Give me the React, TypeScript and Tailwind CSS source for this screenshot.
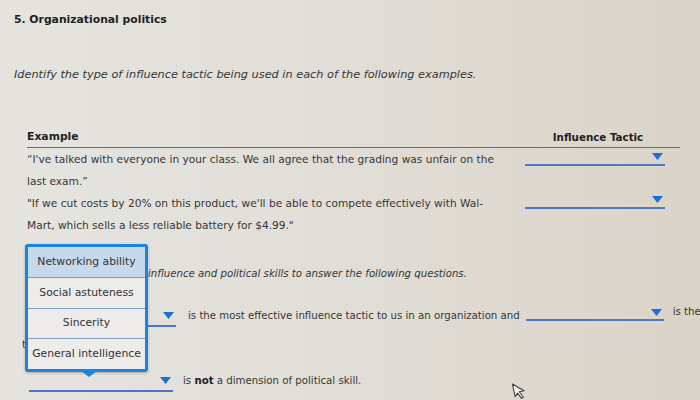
import React from "react";

const FONT = { fontFamily: '"DejaVu Sans", Verdana, sans-serif' };

interface DropProps {
  width: string;
  height: string;
  className?: string;
}

// underline-style select with the small blue arrow at the right end
const Drop: React.FC<DropProps> = ({ width, height, className = "" }) => (
  <div
    className={`${width} ${height} ${className} shrink-0 border-b-2 border-b-[#4d79c4] flex items-center justify-end pr-[2px]`}
  >
    <svg width="11" height="7" viewBox="0 0 11 7">
      <polygon points="0,0 11,0 5.5,7" fill="#1f6fd3" />
    </svg>
  </div>
);

const options = [
  { id: 1, label: "Networking ability", h: "h-[30px]", active: true },
  { id: 2, label: "Social astuteness", h: "h-[31px]", active: false },
  { id: 3, label: "Sincerity", h: "h-[30px]", active: false },
  { id: 4, label: "General intelligence", h: "h-[31px]", active: false },
];

const Popup: React.FC = () => (
  <div className="absolute left-[25px] top-[244px] w-[123px]">
    <div className="border-[3px] border-[#1c84dc] rounded-[3px] bg-[#edecea] shadow-[0_1px_3px_rgba(0,0,0,0.25)] flex flex-col">
      {options.map((o, i) => (
        <div
          key={o.id}
          className={`${o.h} flex items-center justify-center text-[10.8px] text-[#333] whitespace-nowrap ${
            o.active ? "bg-[#c6d8eb]" : ""
          } ${i > 0 ? "border-t border-t-[#7f9fc0]" : ""}`}
        >
          {o.label}
        </div>
      ))}
    </div>
    <div className="flex justify-center -mt-px pl-[4px]">
      <div className="w-0 h-0 border-l-[8px] border-l-transparent border-r-[8px] border-r-transparent border-t-[6px] border-t-[#1c84dc]" />
    </div>
  </div>
);

const Cursor: React.FC = () => (
  <svg
    className="absolute left-[512px] top-[382px]"
    width="16"
    height="18"
    viewBox="0 0 16 18"
  >
    <path
      d="M2 1 L2 14 L5 11 L8 17 L10 16 L7 10 L12 10 Z"
      fill="#f2f0ec"
      stroke="#3a3a3a"
      strokeWidth="1"
      strokeLinejoin="round"
      transform="rotate(-12 6 9)"
    />
  </svg>
);

export default function App() {
  return (
    <div
      className="w-[700px] h-[400px] relative overflow-hidden bg-gradient-to-r from-[#e5e4df] via-[#e1ded7] to-[#dad3c8] text-[#363636]"
      style={FONT}
    >
      <div className="pt-[12px] pl-[14px] text-[10.8px] leading-[16px] font-bold text-[#1f1f1f]">
        5. Organizational politics
      </div>

      <div className="mt-[39px] pl-[14px] text-[11.3px] leading-[16px] italic">
        Identify the type of influence tactic being used in each of the following examples.
      </div>

      <div className="mt-[45px] ml-[27px] w-[653px] text-[10.6px]">
        <div className="grid grid-cols-[498px_140px_15px] h-[20px] items-center border-b-[1.5px] border-b-[#6f6c67] font-bold text-[#222]">
          <div className="text-[10.8px]">Example</div>
          <div className="text-center pl-[6px] text-[10.3px]">Influence Tactic</div>
          <div />
        </div>

        <div className="grid grid-cols-[498px_140px_15px] leading-[22px]">
          <div className="pr-[23px]">
            “I've talked with everyone in your class. We all agree that the grading was unfair on the last exam.”
          </div>
          <Drop width="w-[140px]" height="h-[18px]" />
          <div />
        </div>

        <div className="grid grid-cols-[498px_140px_15px] leading-[22px]">
          <div className="pr-[23px]">
            "If we cut costs by 20% on this product, we'll be able to compete effectively with Wal-Mart, which sells a less reliable battery for $4.99."
          </div>
          <Drop width="w-[140px]" height="h-[17px]" />
          <div />
        </div>
      </div>

      <div className="mt-[30px] pl-[22px] text-[10.2px]">
        <div className="leading-[16px] italic pl-[6px] whitespace-nowrap">
          Use your knowledge of influence and political skills to answer the following questions.
        </div>

        <div className="mt-[23px] flex items-start h-[24px] whitespace-nowrap">
          <Drop width="w-[147px]" height="h-[22px]" className="ml-[7px]" />
          <div className="ml-[12px] leading-[22px] shrink-0">
            is the most effective influence tactic to us in an organization and
          </div>
          <Drop width="w-[138px]" height="h-[16px]" className="ml-[6px]" />
          <div className="ml-[9px] leading-[14px] shrink-0">is the</div>
        </div>

        <div className="mt-[5px] leading-[22px]">the least.</div>

        <div className="mt-[14px] flex items-start whitespace-nowrap">
          <Drop width="w-[144px]" height="h-[22px]" className="ml-[7px]" />
          <div className="ml-[10px] leading-[22px] shrink-0">
            is <span className="font-bold text-[#222]">not</span> a dimension of political skill.
          </div>
        </div>
      </div>

      <Popup />
      <Cursor />
    </div>
  );
}
